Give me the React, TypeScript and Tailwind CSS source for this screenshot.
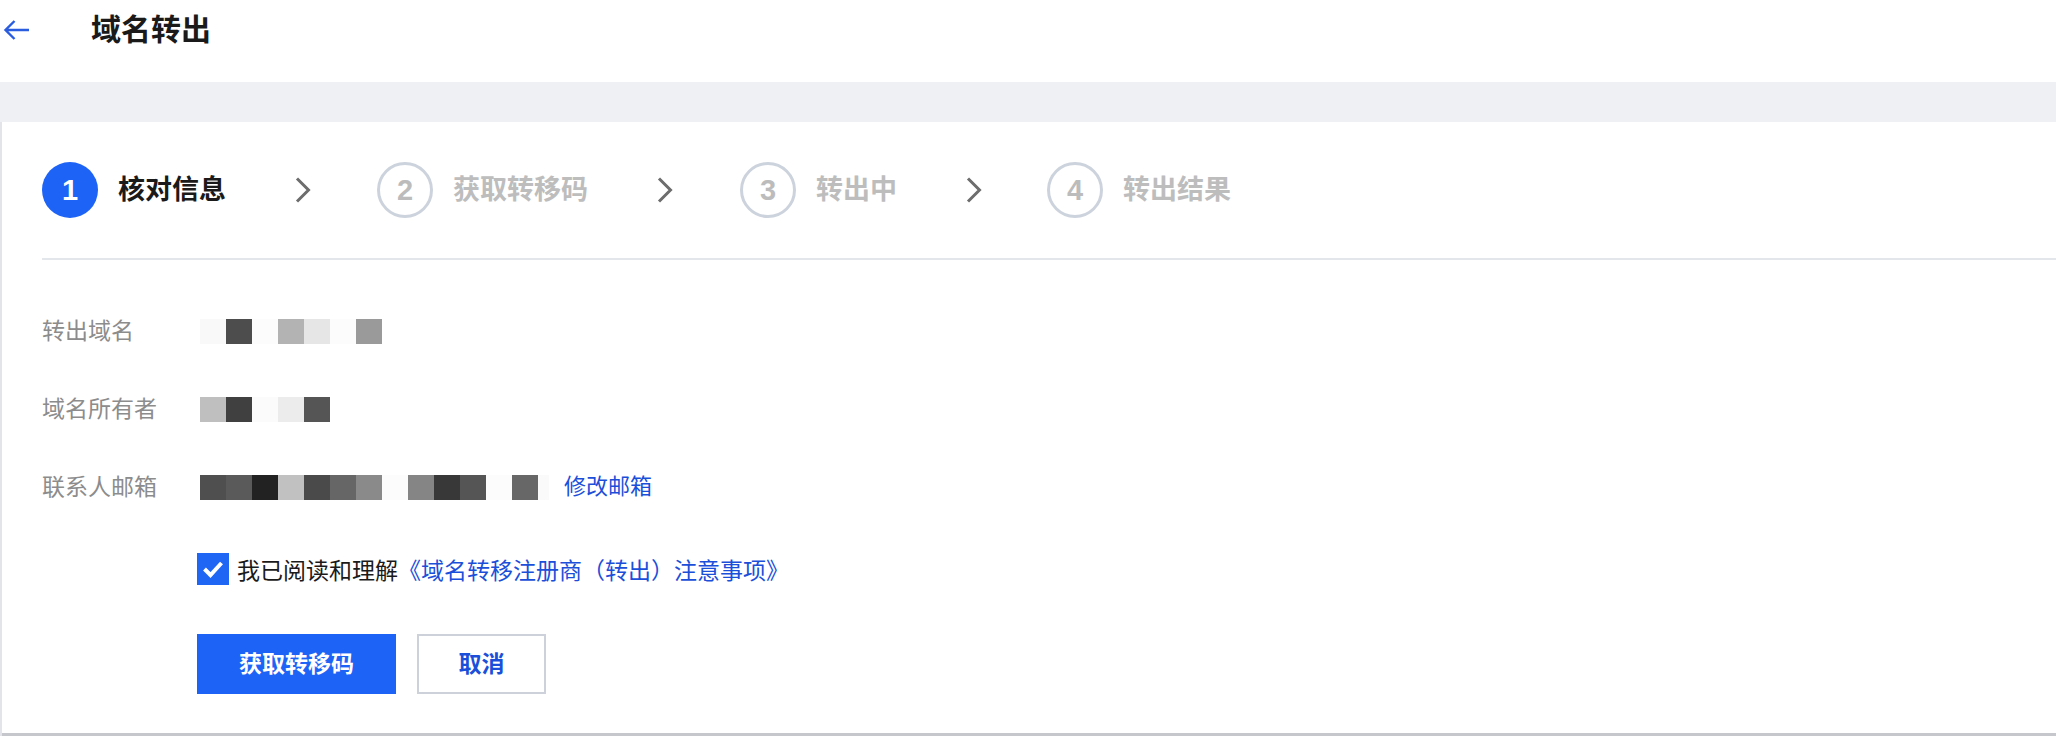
import React from "react";

const FONT = '"Liberation Sans", "Noto Sans CJK SC", sans-serif';

const v1 = ["#f9f9f9", "#4d4d4d", "#fcfcfc", "#b3b3b3", "#e6e6e6", "#fcfcfc", "#9a9a9a"];
const v2 = ["#bfbfbf", "#404040", "#fbfbfb", "#ececec", "#555555"];
const v3 = [
  "#4f4f4f", "#5a5a5a", "#222222", "#c1c1c1", "#4a4a4a", "#666666", "#8a8a8a",
  "#fcfcfc", "#858585", "#383838", "#555555", "#fcfcfc", "#676767",
];

function Blocks({ colors, tail }: { colors: string[]; tail?: boolean }) {
  return (
    <div className="flex h-[25px]">
      {colors.map((c, i) => (
        <div key={i} className="w-[26px] h-full" style={{ backgroundColor: c }} />
      ))}
      {tail && <div className="w-[11px] h-full bg-[#fafafa]" />}
    </div>
  );
}

function Chevron({ cls }: { cls: string }) {
  return (
    <svg className={cls} width="16" height="26" viewBox="0 0 16 26" fill="none">
      <polyline points="2,1.5 13.5,13 2,24.5" stroke="#6d6d6d" strokeWidth="3" />
    </svg>
  );
}

function Step({ n, label, active }: { n: string; label: string; active?: boolean }) {
  return (
    <div className="flex items-center gap-[20px]">
      {active ? (
        <div className="w-[56px] h-[56px] rounded-full bg-[#1d63f6] flex items-center justify-center text-white text-[29px] font-bold leading-none">
          {n}
        </div>
      ) : (
        <div className="w-[56px] h-[56px] rounded-full border-[3px] border-[#cdd3dc] flex items-center justify-center text-[#bcbcbc] text-[29px] font-bold leading-none">
          {n}
        </div>
      )}
      <span
        className={
          "text-[27px] font-bold leading-none whitespace-nowrap " +
          (active ? "text-[#1a1a1a]" : "text-[#bdbdbd]")
        }
      >
        {label}
      </span>
    </div>
  );
}

export default function App() {
  return (
    <div className="w-full h-[736px] overflow-hidden flex flex-col bg-white" style={{ fontFamily: FONT }}>
      {/* header */}
      <div className="h-[82px] shrink-0 bg-white">
        <div className="h-[60px] flex items-center">
          <svg className="ml-[3px]" width="27" height="22" viewBox="0 0 27 22" fill="none">
            <path d="M26 11H2.5M11.5 2L2.5 11L11.5 20" stroke="#2a5ce0" strokeWidth="2.4" />
          </svg>
          <h1 className="ml-[61px] text-[30px] font-bold text-[#1a1a1a] leading-none">域名转出</h1>
        </div>
      </div>
      {/* gray band */}
      <div className="h-[40px] shrink-0 bg-[#eff0f4]" />
      {/* card area */}
      <div className="flex-1 flex bg-[#e3e4e9] pl-[2px]">
        <div className="flex-1 bg-white border-b-[3px] border-[#c6c7cc] flex flex-col">
          {/* steps */}
          <div className="pt-[40px] pl-[40px] flex items-center h-[96px]">
            <Step n="1" label="核对信息" active />
            <Chevron cls="ml-[69px] mr-[66px]" />
            <Step n="2" label="获取转移码" />
            <Chevron cls="ml-[69px] mr-[67px]" />
            <Step n="3" label="转出中" />
            <Chevron cls="ml-[69px] mr-[65px]" />
            <Step n="4" label="转出结果" />
          </div>
          <div className="ml-[40px] mt-[40px] h-[2px] bg-[#e3e6eb]" />

          {/* form rows */}
          <div className="pl-[40px] mt-[56px] flex flex-col gap-[48px]">
            <div className="flex items-center h-[30px]">
              <span className="w-[158px] text-[23px] text-[#8c8c8c] leading-none">转出域名</span>
              <Blocks colors={v1} />
            </div>
            <div className="flex items-center h-[30px]">
              <span className="w-[158px] text-[23px] text-[#8c8c8c] leading-none">域名所有者</span>
              <Blocks colors={v2} />
            </div>
            <div className="flex items-center h-[30px]">
              <span className="w-[158px] text-[23px] text-[#8c8c8c] leading-none">联系人邮箱</span>
              <Blocks colors={v3} tail />
              <a className="ml-[15px] text-[22px] text-[#1b4fd9] leading-none cursor-pointer">修改邮箱</a>
            </div>
          </div>

          {/* agreement */}
          <div className="pl-[195px] mt-[51px] flex items-center h-[32px]">
            <div className="w-[32px] h-[32px] bg-[#1f66f5] flex items-center justify-center">
              <svg width="22" height="18" viewBox="0 0 22 18" fill="none">
                <polyline points="2.5,9 8.5,15 19.5,3" stroke="white" strokeWidth="4" />
              </svg>
            </div>
            <span className="ml-[8px] text-[23px] text-[#1a1a1a] leading-none mt-[5px]">
              我已阅读和理解
              <a className="text-[#1b4fd9] cursor-pointer">《域名转移注册商（转出）注意事项》</a>
            </span>
          </div>

          {/* buttons */}
          <div className="pl-[195px] mt-[49px] flex gap-[21px]">
            <button className="w-[199px] h-[60px] bg-[#1d63f6] text-white text-[23px] font-bold">
              获取转移码
            </button>
            <button className="w-[129px] h-[60px] bg-white border-2 border-[#cdd2da] text-[#1b4fd9] text-[23px] font-bold">
              取消
            </button>
          </div>
        </div>
      </div>
    </div>
  );
}
